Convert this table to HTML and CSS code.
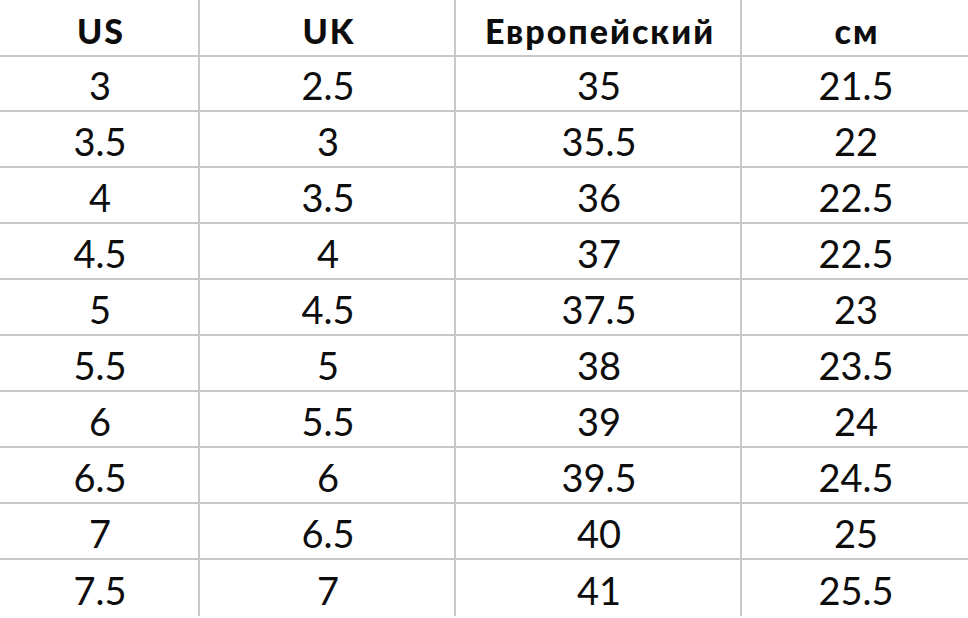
FILE: index.html
```html
<!DOCTYPE html>
<html lang="ru">
<head>
<meta charset="utf-8">
<title>Таблица размеров</title>
<link rel="stylesheet" href="styles.css">
</head>
<body>
<div class="table">
  <div class="cell head">US</div><div class="cell head">UK</div><div class="cell head">Европейский</div><div class="cell head last">см</div>
  <div class="cell">3</div><div class="cell">2.5</div><div class="cell">35</div><div class="cell last">21.5</div>
  <div class="cell">3.5</div><div class="cell">3</div><div class="cell">35.5</div><div class="cell last">22</div>
  <div class="cell">4</div><div class="cell">3.5</div><div class="cell">36</div><div class="cell last">22.5</div>
  <div class="cell">4.5</div><div class="cell">4</div><div class="cell">37</div><div class="cell last">22.5</div>
  <div class="cell">5</div><div class="cell">4.5</div><div class="cell">37.5</div><div class="cell last">23</div>
  <div class="cell">5.5</div><div class="cell">5</div><div class="cell">38</div><div class="cell last">23.5</div>
  <div class="cell">6</div><div class="cell">5.5</div><div class="cell">39</div><div class="cell last">24</div>
  <div class="cell">6.5</div><div class="cell">6</div><div class="cell">39.5</div><div class="cell last">24.5</div>
  <div class="cell">7</div><div class="cell">6.5</div><div class="cell">40</div><div class="cell last">25</div>
  <div class="cell bottom">7.5</div><div class="cell bottom">7</div><div class="cell bottom">41</div><div class="cell bottom last">25.5</div>
</div>
</body>
</html>
```
FILE: styles.css
```css
html, body {
  margin: 0;
  padding: 0;
  background: #ffffff;
}
body {
  width: 968px;
  height: 618px;
  overflow: hidden;
  font-family: Lato, "Open Sans", "Noto Sans", sans-serif;
  color: #0d0d0d;
}
.table {
  display: grid;
  grid-template-columns: 200px 256px 286px 1fr;
  grid-auto-rows: 56px;
}
.cell {
  box-sizing: border-box;
  display: flex;
  align-items: center;
  justify-content: center;
  border-right: 2px solid #c8c8c8;
  border-bottom: 2px solid #c8c8c8;
  font-size: 38px;
  padding-top: 3px;
  padding-left: 2px;
}
.cell.head {
  height: 57px;
  font-size: 34px;
  font-weight: 900;
  letter-spacing: 2px;
  padding-top: 5px;
  padding-left: 4px;
}
.cell.last {
  border-right: none;
}
.cell.bottom {
  border-bottom: none;
}
```
